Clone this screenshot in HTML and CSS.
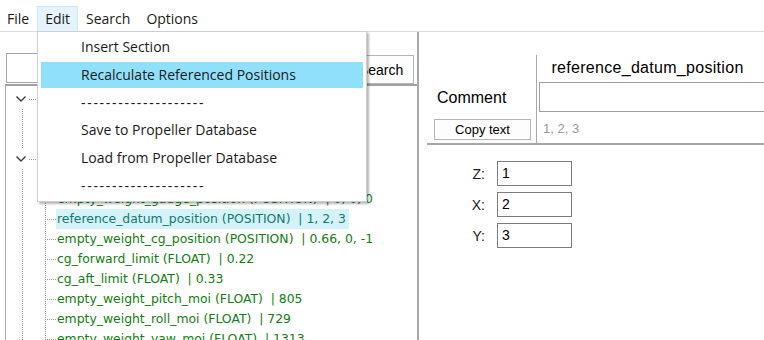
FILE: index.html
```html
<!DOCTYPE html>
<html>
<head>
<meta charset="utf-8">
<link rel="stylesheet" href="styles.css">
</head>
<body>
<div class="menubar">
  <span class="menu-item">File</span>
  <span class="menu-item active">Edit</span>
  <span class="menu-item">Search</span>
  <span class="menu-item">Options</span>
</div>
<div class="main">
  <div class="left">
    <div class="search-row">
      <div class="search-input"></div>
      <div class="btn search-btn">Search</div>
    </div>
    <div class="tree-box">
      <div class="roots">
        <div class="root">
          <div class="row root-row"><span class="chev"><svg width="10" height="6" viewBox="0 0 10 6"><polyline points="0.5,0.5 5,5 9.5,0.5" fill="none" stroke="#3c3c3c" stroke-width="1.4"/></svg></span><span class="conn conn-root"></span><span class="label">Aircraft (SECTION)</span></div>
          <div class="children">
            <div class="row"><span class="conn"></span><span class="label">name (STRING)  | C172</span></div>
            <div class="row"><span class="conn"></span><span class="label">version (INT)  | 1</span></div>
          </div>
        </div>
        <div class="root">
          <div class="row root-row"><span class="chev"><svg width="10" height="6" viewBox="0 0 10 6"><polyline points="0.5,0.5 5,5 9.5,0.5" fill="none" stroke="#3c3c3c" stroke-width="1.4"/></svg></span><span class="conn conn-root"></span><span class="label">Weight and Balance (SECTION)</span></div>
          <div class="children">
            <div class="row"><span class="conn"></span><span class="label">max_gross_weight (FLOAT)  | 2550</span></div>
            <div class="row"><span class="conn"></span><span class="label">empty_weight_gauge_position (POSITION)  | 0, 0, 0</span></div>
            <div class="row"><span class="conn"></span><span class="label selected">reference_datum_position (POSITION)  | 1, 2, 3</span></div>
            <div class="row"><span class="conn"></span><span class="label">empty_weight_cg_position (POSITION)  | 0.66, 0, -1</span></div>
            <div class="row"><span class="conn"></span><span class="label">cg_forward_limit (FLOAT)  | 0.22</span></div>
            <div class="row"><span class="conn"></span><span class="label">cg_aft_limit (FLOAT)  | 0.33</span></div>
            <div class="row"><span class="conn"></span><span class="label">empty_weight_pitch_moi (FLOAT)  | 805</span></div>
            <div class="row"><span class="conn"></span><span class="label">empty_weight_roll_moi (FLOAT)  | 729</span></div>
            <div class="row"><span class="conn"></span><span class="label">empty_weight_yaw_moi (FLOAT)  | 1313</span></div>
          </div>
        </div>
      </div>
    </div>
  </div>
  <div class="right">
    <div class="prop-table">
      <div class="cell c1"></div>
      <div class="cell c2 header">reference_datum_position</div>
      <div class="cell c1 comment-label">Comment</div>
      <div class="cell c2"><div class="comment-input"></div></div>
      <div class="cell c1"><div class="btn copy-btn">Copy text</div></div>
      <div class="cell c2 value-text">1, 2, 3</div>
    </div>
    <div class="coords">
      <div class="coord"><span class="coord-label">Z:</span><span class="coord-box">1</span></div>
      <div class="coord"><span class="coord-label">X:</span><span class="coord-box">2</span></div>
      <div class="coord"><span class="coord-label">Y:</span><span class="coord-box">3</span></div>
    </div>
  </div>
</div>
<div class="dropdown">
  <div class="dd-item">Insert Section</div>
  <div class="dd-item hl">Recalculate Referenced Positions</div>
  <div class="dd-item sep">--------------------</div>
  <div class="dd-item">Save to Propeller Database</div>
  <div class="dd-item">Load from Propeller Database</div>
  <div class="dd-item sep">--------------------</div>
</div>
</body>
</html>
```
FILE: styles.css
```css
* { box-sizing: border-box; }
html, body { margin: 0; padding: 0; }
body {
  width: 764px;
  height: 340px;
  overflow: hidden;
  background: #fff;
  position: relative;
  font-family: "Liberation Sans", Arial, sans-serif;
  color: #000;
}
.menubar {
  height: 32px;
  padding-top: 6px;
  border-bottom: 1px solid #dadada;
  display: flex;
  font-family: "Open Sans", "Noto Sans", sans-serif;
  font-size: 14px;
  color: #1a1a1a;
}
.menu-item {
  height: 25px;
  line-height: 23px;
  padding: 0 7px;
  border: 1px solid transparent;
  border-bottom: none;
}
.menu-item:first-child { padding-left: 6px; }
.menu-item.active {
  background: #e5f3ff;
  border-color: #cce8ff;
}
.main {
  display: flex;
  height: 308px;
}
.left {
  width: 417px;
  padding-top: 21px;
  display: flex;
  flex-direction: column;
}
.search-row {
  display: flex;
  align-items: flex-start;
  padding-left: 6px;
  height: 31px;
}
.search-input {
  width: 340px;
  height: 30px;
  border: 1px solid #a5a5a5;
  background: #fff;
}
.btn {
  background: #fdfdfd;
  border: 1px solid #b4b4b4;
  display: flex;
  align-items: center;
  justify-content: center;
  font-family: "Liberation Sans", Arial, sans-serif;
}
.search-btn {
  margin-left: 2px;
  margin-top: 2px;
  width: 66px;
  height: 29px;
  font-size: 14px;
}
.tree-box {
  margin-left: 5px;
  flex: 1;
  border-top: 2px solid #a0a0a0;
  border-left: 1px solid #a8a8a8;
  padding-top: 3px;
  font-family: "DejaVu Sans", Verdana, sans-serif;
  font-size: 12.4px;
  color: #0f800f;
}
.roots {
  background-image: linear-gradient(to bottom, #9a9a9a 50%, transparent 50%);
  background-size: 1px 2px;
  background-repeat: repeat-y;
  background-position: 16px 0;
}
.children {
  background-image: linear-gradient(to bottom, #9a9a9a 50%, transparent 50%);
  background-size: 1px 2px;
  background-repeat: repeat-y;
  background-position: 39px 0;
}
.row {
  height: 20px;
  display: flex;
  align-items: center;
  padding-left: 39px;
  white-space: pre;
}
.root-row { padding-left: 8px; }
.chev {
  width: 14px;
  height: 20px;
  background: #fff;
  display: flex;
  align-items: center;
  justify-content: center;
}
.conn {
  width: 11px;
  border-top: 1px dotted #9a9a9a;
}
.conn-root { width: 9px; margin-left: 1px; }
.label {
  padding: 2px 3px 2px 1px;
  line-height: 16px;
}
.root-row .label { padding-left: 2px; }
.label.selected {
  background: #d4f2f9;
  color: #107a6a;
  padding-right: 3px;
}
.right {
  flex: 1;
  border-left: 2px solid #a8a8a8;
  padding-left: 8px;
  padding-top: 23px;
  display: flex;
  flex-direction: column;
  overflow: hidden;
}
.prop-table {
  display: grid;
  grid-template-columns: 109px 1fr;
  grid-template-rows: 27px 30px 31px;
  border-bottom: 2px solid #a8a8a8;
  margin-right: -10px;
}
.cell { display: flex; align-items: center; }
.c2 { border-left: 1px solid #a8a8a8; }
.header {
  justify-content: center;
  font-size: 16px;
  letter-spacing: 0.3px;
  padding-right: 16px;
  padding-bottom: 2px;
}
.comment-label {
  font-size: 16px;
  padding-left: 10px;
  padding-top: 2px;
}
.comment-input {
  flex: 1;
  height: 30px;
  margin-left: 2px;
  border: 1px solid #a0a0a0;
  background: #fff;
}
.copy-btn {
  margin-left: 7px;
  margin-top: 4px;
  width: 97px;
  height: 21px;
  font-size: 13px;
}
.value-text {
  padding-left: 6px;
  padding-top: 2px;
  color: #9a9a9a;
  font-size: 13px;
}
.coords {
  display: flex;
  flex-direction: column;
  gap: 6px;
  margin-top: 16px;
  padding-left: 44px;
}
.coord {
  display: flex;
  align-items: center;
  height: 25px;
}
.coord-label {
  width: 14px;
  text-align: right;
  font-size: 14px;
  color: #202020;
}
.coord-box {
  margin-left: 12px;
  width: 75px;
  height: 25px;
  border: 1px solid #7d7d7d;
  font-size: 14px;
  padding-left: 4px;
  line-height: 22px;
}
.dropdown {
  position: absolute;
  left: 37px;
  top: 31px;
  width: 330px;
  height: 171px;
  background: #fff;
  border: 1px solid #cfcfcf;
  box-shadow: 2px 2px 2px rgba(0, 0, 0, 0.28);
  padding: 1px 3px 0 3px;
  font-family: "Open Sans", "Noto Sans", sans-serif;
  font-size: 14px;
  color: #1a1a1a;
}
.dd-item {
  height: 28px;
  line-height: 28px;
  padding-left: 40px;
  white-space: pre;
}
.dd-item.sep { height: 27px; line-height: 27px; letter-spacing: 1.7px; }
.dd-item.hl {
  background: #91e0fb;
  height: 26px;
  line-height: 26px;
  margin: 1px 0;
}
```
